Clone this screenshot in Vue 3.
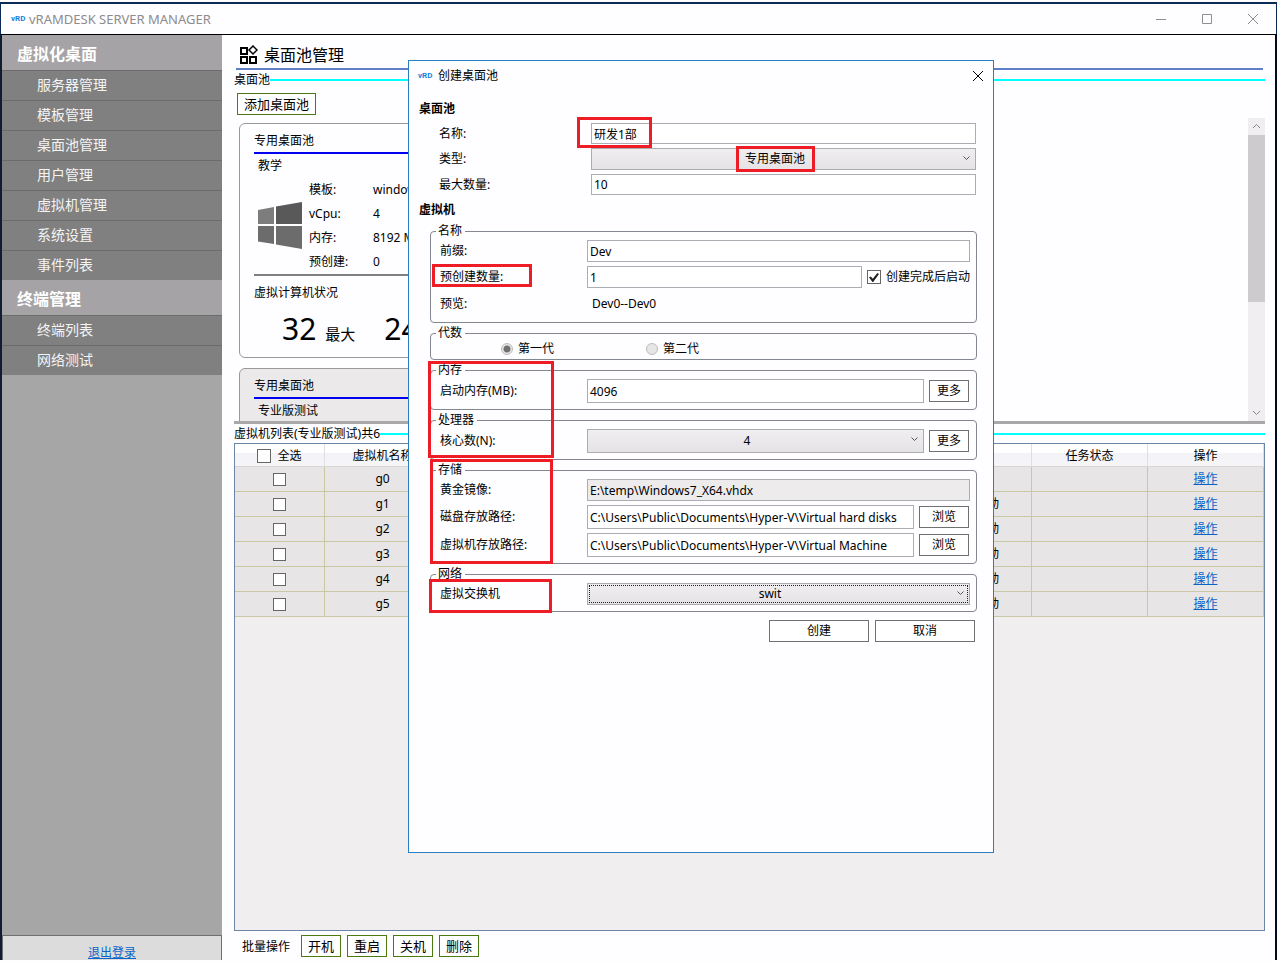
<script setup>
import { ref } from 'vue'

const menu = [
  { title: '虚拟化桌面', items: ['服务器管理', '模板管理', '桌面池管理', '用户管理', '虚拟机管理', '系统设置', '事件列表'] },
  { title: '终端管理', items: ['终端列表', '网络测试'] }
]

const specs = [
  { label: '模板:', value: 'windows7' },
  { label: 'vCpu:', value: '4' },
  { label: '内存:', value: '8192 MB' },
  { label: '预创建:', value: '0' }
]

const machines = [
  { name: 'g0', state: '' },
  { name: 'g1', state: '未启动' },
  { name: 'g2', state: '未启动' },
  { name: 'g3', state: '未启动' },
  { name: 'g4', state: '未启动' },
  { name: 'g5', state: '未启动' }
]

const batch = ['开机', '重启', '关机', '删除']

const form = ref({
  name: '研发1部',
  type: '专用桌面池',
  max: '10',
  prefix: 'Dev',
  count: '1',
  autostart: true,
  memory: '4096',
  cores: '4',
  image: 'E:\\temp\\Windows7_X64.vhdx',
  diskPath: 'C:\\Users\\Public\\Documents\\Hyper-V\\Virtual hard disks',
  vmPath: 'C:\\Users\\Public\\Documents\\Hyper-V\\Virtual Machine',
  network: 'swit'
})
</script>

<template>
  <div class="window">
    <header class="titlebar">
      <span class="logo">vRD</span>
      <span class="app-name">vRAMDESK SERVER MANAGER</span>
      <div class="window-buttons">
        <button type="button" aria-label="最小化"><svg width="12" height="12" viewBox="0 0 12 12"><path d="M1 6.500h10" /></svg></button>
        <button type="button" aria-label="最大化"><svg width="12" height="12" viewBox="0 0 12 12"><path d="M1.500 1.500h9v9h-9z" /></svg></button>
        <button type="button" aria-label="关闭"><svg width="12" height="12" viewBox="0 0 12 12"><path d="M1 1l10 10M11 1L1 11" /></svg></button>
      </div>
    </header>

    <div class="body">
      <nav class="sidebar">
        <section v-for="group in menu" :key="group.title">
          <h2>{{ group.title }}</h2>
          <a v-for="item in group.items" :key="item" href="#">{{ item }}</a>
        </section>
        <div class="logout"><a href="#">退出登录</a></div>
      </nav>

      <main class="main">
        <h1 class="page-title">
          <svg width="19" height="19" viewBox="0 0 19 19">
            <path stroke-width="2" d="M2 3h6v6H2zM2 12h6v6H2zM11 12h6v6h-6z" />
            <path stroke-width="1.5" d="M14 1L18 5 14 9 10 5z" />
          </svg>
          桌面池管理
        </h1>
        <div class="caption"><span>桌面池</span></div>
        <div class="toolbar"><button type="button" class="green">添加桌面池</button></div>

        <div class="pools">
          <div class="cards">
            <article class="card">
              <h3>专用桌面池</h3>
              <div class="pool-name">教学</div>
              <div class="pool-info">
                <svg class="win-logo" width="44" height="48" viewBox="0 0 44 48">
                  <path fill="#7d7d7d" d="M0 9l16-3v17H0z" />
                  <path fill="#595959" d="M18 5.500L44 1v22H18z" />
                  <path fill="#6c6c6c" d="M0 25h16v18L0 40.500zM18 25h26v23l-26-4.500z" />
                </svg>
                <dl>
                  <template v-for="s in specs" :key="s.label">
                    <dt>{{ s.label }}</dt>
                    <dd>{{ s.value }}</dd>
                  </template>
                </dl>
              </div>
              <div class="status-title">虚拟计算机状况</div>
              <div class="stats">
                <span><b>32</b>最大</span>
                <span><b>24</b></span>
              </div>
            </article>
            <article class="card selected">
              <h3>专用桌面池</h3>
              <div class="pool-name">专业版测试</div>
            </article>
          </div>
          <div class="scrollbar">
            <svg width="17" height="17" viewBox="0 0 17 17"><path d="M5 10l3.500-3.500L12 10" /></svg>
            <div class="thumb"></div>
            <svg width="17" height="17" viewBox="0 0 17 17"><path d="M5 7l3.500 3.500L12 7" /></svg>
          </div>
        </div>

        <div class="caption list-caption"><span>虚拟机列表(专业版测试)共6</span></div>
        <div class="grid-box">
          <table>
            <colgroup>
              <col class="c-check" /><col class="c-mid" /><col /><col /><col /><col /><col class="c-mid" /><col class="c-mid" /><col class="c-mid" />
            </colgroup>
            <thead>
              <tr>
                <th><label class="check-all"><input type="checkbox" class="tick" />全选</label></th>
                <th>虚拟机名称</th>
                <th></th><th></th><th></th><th></th><th></th>
                <th>任务状态</th>
                <th>操作</th>
              </tr>
            </thead>
            <tbody>
              <tr v-for="m in machines" :key="m.name">
                <td><input type="checkbox" class="tick small" :aria-label="m.name" /></td>
                <td>{{ m.name }}</td>
                <td></td><td></td><td></td><td></td>
                <td class="state">{{ m.state }}</td>
                <td></td>
                <td><a href="#">操作</a></td>
              </tr>
            </tbody>
          </table>
        </div>
        <div class="batch">
          <span>批量操作</span>
          <button v-for="b in batch" :key="b" type="button" class="green">{{ b }}</button>
        </div>
      </main>
    </div>

    <form class="dialog" role="dialog" aria-label="创建桌面池" @submit.prevent>
      <div class="dialog-title">
        <span class="logo">vRD</span>
        <span>创建桌面池</span>
        <button type="button" aria-label="关闭对话框"><svg width="12" height="12" viewBox="0 0 12 12"><path d="M1 1l10 10M11 1L1 11" /></svg></button>
      </div>

      <h4>桌面池</h4>
      <div class="fields">
        <div class="row"><label for="name">名称:</label><input id="name" v-model="form.name" type="text" /></div>
        <div class="row choice">
          <label for="type">类型:</label>
          <div class="select">
            <select id="type" v-model="form.type"><option>专用桌面池</option></select>
            <svg width="7" height="5" viewBox="0 0 7 5"><path d="M.5.5l3 3 3-3" /></svg>
          </div>
        </div>
        <div class="row"><label for="max">最大数量:</label><input id="max" v-model="form.max" type="text" /></div>
      </div>

      <h4 class="vm-heading">虚拟机</h4>
      <fieldset>
        <legend>名称</legend>
        <div class="row"><label for="prefix">前缀:</label><input id="prefix" v-model="form.prefix" type="text" /></div>
        <div class="row">
          <label for="count">预创建数量:</label><input id="count" v-model="form.count" type="text" />
          <label class="auto"><input v-model="form.autostart" type="checkbox" class="tick" />创建完成后启动</label>
        </div>
        <div class="row preview"><span class="label">预览:</span><output>Dev0--Dev0</output></div>
      </fieldset>

      <fieldset>
        <legend>代数</legend>
        <div class="radios">
          <label><input type="radio" name="gen" checked disabled />第一代</label>
          <label><input type="radio" name="gen" disabled />第二代</label>
        </div>
      </fieldset>

      <fieldset>
        <legend>内存</legend>
        <div class="row tall"><label for="memory">启动内存(MB):</label><input id="memory" v-model="form.memory" type="text" /><button type="button">更多</button></div>
      </fieldset>

      <fieldset>
        <legend>处理器</legend>
        <div class="row tall">
          <label for="cores">核心数(N):</label>
          <div class="select">
            <select id="cores" v-model="form.cores"><option>4</option></select>
            <svg width="7" height="5" viewBox="0 0 7 5"><path d="M.5.5l3 3 3-3" /></svg>
          </div>
          <button type="button">更多</button>
        </div>
      </fieldset>

      <fieldset>
        <legend>存储</legend>
        <div class="row"><label for="image">黄金镜像:</label><input id="image" v-model="form.image" type="text" readonly /></div>
        <div class="row tall"><label for="disk">磁盘存放路径:</label><input id="disk" v-model="form.diskPath" type="text" /><button type="button" class="browse">浏览</button></div>
        <div class="row tall"><label for="vm">虚拟机存放路径:</label><input id="vm" v-model="form.vmPath" type="text" /><button type="button" class="browse">浏览</button></div>
      </fieldset>

      <fieldset>
        <legend>网络</legend>
        <div class="row">
          <label for="net">虚拟交换机</label>
          <div class="select focused">
            <select id="net" v-model="form.network"><option>swit</option></select>
            <svg width="7" height="5" viewBox="0 0 7 5"><path d="M.5.5l3 3 3-3" /></svg>
          </div>
        </div>
      </fieldset>

      <div class="actions">
        <button type="submit">创建</button>
        <button type="button">取消</button>
      </div>

      <i class="mark mark-name"></i>
      <i class="mark mark-type"></i>
      <i class="mark mark-count"></i>
      <i class="mark mark-compute"></i>
      <i class="mark mark-storage"></i>
      <i class="mark mark-switch"></i>
    </form>
  </div>
</template>

<style>
body {
  background: #fff;
}
</style>

<style scoped>
.window,
.window * {
  box-sizing: border-box;
}
.window {
  position: relative;
  display: flex;
  flex-direction: column;
  height: 100vh;
  overflow: hidden;
  padding-top: 2px;
  padding-bottom: 2px;
  background: #fefdff;
  color: #000;
  font: 12px/16px "Noto Sans", "Noto Sans CJK SC", sans-serif;
}
button,
input,
select {
  margin: 0;
  font: inherit;
  color: inherit;
}
h1, h2, h3, h4, dl, dd {
  margin: 0;
}
svg {
  display: block;
  fill: none;
  stroke: currentColor;
}
.logo {
  width: 14px;
  flex: none;
  color: #1583dc;
  font: bold 8px/16px Roboto, "Liberation Sans", sans-serif;
}

/* title bar */
.titlebar {
  display: flex;
  align-items: center;
  height: 33px;
  flex: none;
  padding-left: 10px;
  border-top: 2px solid #0b2a55;
  border-right: 1px solid #0b2a55;
  border-left: 1px solid #0b2a55;
  border-bottom: 1px solid #000;
}
.app-name {
  margin-left: 4px;
  color: #8c8c8c;
  font-size: 13px;
}
.window-buttons {
  display: flex;
  margin-left: auto;
}
.window-buttons button {
  display: grid;
  place-items: center;
  width: 46px;
  height: 28px;
  padding: 0;
  border: 0;
  background: none;
  color: #8e8e8e;
}

.body {
  display: flex;
  flex: 1;
  min-height: 0;
  border-left: 2px solid #101c30;
  border-right: 2px solid #020c20;
}

/* sidebar */
.sidebar {
  display: flex;
  flex-direction: column;
  flex: none;
  width: 220px;
  background: #a6a6a6;
}
.sidebar h2 {
  height: 35px;
  padding-left: 15px;
  background: #a5a3a5;
  color: #fff;
  font-size: 16px;
  line-height: 38px;
}
.sidebar section a {
  display: block;
  height: 30px;
  padding-left: 35px;
  border-top: 1px solid #6c6c6c;
  background: #808080;
  color: #f4f4f4;
  font-size: 14px;
  line-height: 27px;
  text-decoration: none;
}
.logout {
  height: 25px;
  margin-top: auto;
  border: 1px solid #707070;
  border-bottom: 0;
  background: #dcdcdc;
  text-align: center;
  line-height: 34px;
}
.logout a,
td a {
  color: #0a64c8;
}

/* main area */
.main {
  display: flex;
  flex-direction: column;
  flex: 1;
  min-width: 0;
  padding: 0 10px 0 12px;
}
.page-title {
  display: flex;
  align-items: center;
  gap: 6px;
  height: 35px;
  margin: 0 2px;
  padding: 6px 0 0 3px;
  border-bottom: 2px solid #5f7fc9;
  font-size: 16px;
  font-weight: 400;
  line-height: 24px;
}
.caption {
  display: flex;
  align-items: center;
  height: 20px;
}
.caption::after {
  content: "";
  flex: 1;
  height: 2px;
  background: #00ffff;
}
.toolbar {
  padding: 3px;
}
.green {
  height: 22px;
  padding: 0 6px;
  border: 1px solid #4a7a10;
  background: #fff;
  font-size: 13px;
  line-height: 18px;
}
.pools {
  display: flex;
  justify-content: space-between;
  height: 306px;
  flex: none;
  border-bottom: 3px solid #a8a8a8;
}
.cards {
  width: 300px;
  padding: 5px;
  overflow: hidden;
}
.card {
  height: 235px;
  margin-bottom: 10px;
  padding: 9px 14px;
  border: 1px solid #999;
  border-radius: 6px;
  background: #fefdff;
}
.card.selected {
  background: #ebe9ea;
}
.card h3 {
  padding-bottom: 3px;
  border-bottom: 2px solid #0000f0;
  font-size: 12px;
  font-weight: 400;
}
.pool-name {
  padding: 4px;
}
.pool-info {
  display: flex;
  gap: 7px;
  height: 98px;
  padding-left: 4px;
  border-bottom: 2px solid #808080;
}
.win-logo {
  margin-top: 23px;
  stroke: none;
}
.pool-info dl {
  display: grid;
  grid-template-columns: 64px 1fr;
  grid-auto-rows: 24px;
  line-height: 24px;
}
.status-title {
  padding-top: 9px;
}
.stats {
  display: flex;
  gap: 29px;
  padding-left: 28px;
  font-size: 15px;
  line-height: 56px;
}
.stats b {
  margin-right: 9px;
  font-size: 30px;
  font-weight: 400;
}
.scrollbar {
  display: flex;
  flex-direction: column;
  width: 17px;
  background: #f0eef0;
  color: #888;
}
.thumb {
  height: 167px;
  margin-bottom: auto;
  background: #cdcbcd;
}

/* machine list */
.list-caption {
  height: 19px;
  flex: none;
}
.grid-box {
  flex: 1;
  min-height: 0;
  border: 1px solid #6b87a8;
  background: #f0eeee;
}
table {
  width: 100%;
  table-layout: fixed;
  border-collapse: separate;
  border-spacing: 0;
}
.c-check {
  width: 90px;
}
.c-mid {
  width: 116px;
}
th {
  height: 23px;
  padding: 2px 0 0;
  border-right: 1px solid #dedee4;
  border-bottom: 1px solid #d5d5d5;
  background: linear-gradient(#fff 40%, #f3f3f7 41%, #f6f6f9);
  font-weight: 400;
}
td {
  height: 25px;
  padding: 0;
  border-right: 1px solid #c9c7a4;
  border-bottom: 1px solid #c9c7a4;
  background: #e7e5e6;
  text-align: center;
}
td.state {
  padding-right: 32px;
  text-align: right;
}
.check-all {
  display: flex;
  align-items: center;
  justify-content: center;
  gap: 6px;
}
.tick {
  appearance: none;
  position: relative;
  width: 14px;
  height: 14px;
  border: 1px solid #666;
  background: #fff;
}
.tick.small {
  display: block;
  width: 13px;
  height: 13px;
  margin: 0 auto;
}
.tick:checked::after {
  content: "";
  position: absolute;
  inset: 2px 1px 1px;
  background: #212121;
  clip-path: polygon(0 48%, 18% 38%, 38% 64%, 84% 0, 100% 10%, 42% 100%, 34% 100%);
}
.batch {
  display: flex;
  align-items: center;
  gap: 6px;
  height: 29px;
  flex: none;
  padding-left: 8px;
}
.batch span {
  margin: 2px 5px 0 0;
}

/* dialog */
.dialog {
  position: absolute;
  top: 60px;
  left: 408px;
  width: 586px;
  height: 793px;
  padding: 0 16px 0 21px;
  border: 1px solid #2a7fc0;
  background: #fefdff;
}
.dialog-title {
  display: flex;
  align-items: center;
  height: 30px;
  margin: 0 -9px 8px -12px;
}
.dialog-title span + span {
  margin-left: 6px;
}
.dialog-title button {
  display: grid;
  place-items: center;
  width: 16px;
  height: 16px;
  margin-left: auto;
  padding: 0;
  border: 0;
  background: none;
}
.dialog h4 {
  margin-left: -11px;
  font-size: 12px;
  line-height: 20px;
}
.dialog .vm-heading {
  margin-bottom: 3px;
}
.fields {
  padding: 4px 1px 1px 9px;
}
.row {
  display: flex;
  align-items: center;
  gap: 5px;
  height: 22px;
  margin-bottom: 4px;
}
.row > label:first-child,
.label {
  width: 142px;
  flex: none;
}
.fields .row {
  height: 21px;
}
.fields .row.choice {
  height: 22px;
}
.fields .row > label:first-child {
  width: 147px;
}
.row.tall {
  height: 24px;
}
.row > input,
.select {
  flex: 1;
  min-width: 0;
  height: 100%;
}
.row > input {
  padding: 0 2px;
  border: 1px solid #abadb3;
  background: #fff;
}
.row > input:read-only {
  background: #edebec;
}
.select {
  position: relative;
}
select {
  display: block;
  width: 100%;
  height: 100%;
  padding: 0 17px 0 0;
  appearance: none;
  border: 1px solid #acacac;
  border-radius: 0;
  background: linear-gradient(#f0eef0, #e5e3e5);
  text-align: center;
  text-align-last: center;
}
.focused select {
  outline: 1px dotted #222;
  outline-offset: -3px;
}
.select svg {
  position: absolute;
  top: 8px;
  right: 6px;
  color: #555;
}
.dialog .row > button,
.actions button {
  height: 22px;
  padding: 0;
  border: 1px solid #707070;
  background: #fff;
}
.row > button {
  width: 40px;
  margin-right: 1px;
}
.row > button.browse {
  width: 50px;
}
fieldset {
  min-width: 0;
  margin: 0 0 2px;
  padding: 1px 6px 2px 9px;
  border: 1px solid #828790;
  border-radius: 4px;
}
legend {
  margin-left: -4px;
  padding: 0 3px 0 2px;
}
.auto {
  display: flex;
  align-items: center;
  gap: 5px;
}
.row.preview {
  height: 24px;
}
.preview output {
  padding-left: 5px;
}
.radios {
  display: flex;
  gap: 92px;
  height: 13px;
  margin: 0 0 2px 61px;
}
.radios label {
  display: flex;
  align-items: center;
  gap: 5px;
}
.radios input {
  appearance: none;
  width: 12px;
  height: 12px;
  border: 1px solid #bcbcbc;
  border-radius: 50%;
  background: #e6e6e6;
}
.radios input:checked {
  background: radial-gradient(circle, #707070 0 3px, #e6e6e6 4px);
}
.actions {
  display: flex;
  justify-content: flex-end;
  gap: 6px;
  padding: 6px 2px 0 0;
}
.actions button {
  width: 100px;
}

/* highlight frames laid over the form */
.mark {
  position: absolute;
  border: 3px solid #ee1c25;
  pointer-events: none;
}
.mark-name { left: 168px; top: 56px; width: 75px; height: 31px; }
.mark-type { left: 327px; top: 85px; width: 79px; height: 26px; }
.mark-count { left: 23px; top: 203px; width: 100px; height: 23px; }
.mark-compute { left: 19px; top: 300px; width: 126px; height: 97px; }
.mark-storage { left: 21px; top: 398px; width: 123px; height: 105px; }
.mark-switch { left: 20px; top: 518px; width: 123px; height: 34px; }
</style>
